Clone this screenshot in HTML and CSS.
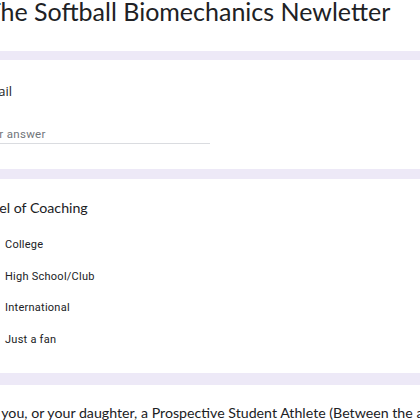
FILE: index.html
```html
<!DOCTYPE html>
<html>
<head>
<meta charset="utf-8">
<link rel="stylesheet" href="styles.css">
</head>
<body>
<div class="page">
  <header class="head">
    <h1 class="title">The Softball Biomechanics Newletter</h1>
  </header>
  <main class="list">
    <section class="card card-email">
      <div class="content">
        <div class="label">Email</div>
        <div class="input"><span class="ph">Your answer</span></div>
      </div>
    </section>
    <section class="card card-level">
      <div class="content level-wrap">
        <div class="qtitle">Level of Coaching</div>
        <div class="options">
          <div class="opt"><span class="radio"></span><span class="otext">College</span></div>
          <div class="opt"><span class="radio"></span><span class="otext">High School/Club</span></div>
          <div class="opt"><span class="radio"></span><span class="otext">International</span></div>
          <div class="opt"><span class="radio"></span><span class="otext">Just a fan</span></div>
        </div>
      </div>
    </section>
    <section class="card card-q3">
      <div class="content q3wrap">
        <div class="qtitle q3">Are you, or your daughter, a Prospective Student Athlete (Between the ages of 13 and 18)?</div>
      </div>
    </section>
  </main>
</div>
</body>
</html>
```
FILE: styles.css
```css
html, body {
  margin: 0;
  padding: 0;
  background: #ffffff;
}
.page {
  width: 420px;
  height: 420px;
  overflow: hidden;
  background: #ede9f7;
}
.head {
  background: #ffffff;
  height: 51px;
  overflow: hidden;
}
.title {
  margin: 0 0 0 -14px;
  font-family: Lato, "Open Sans", sans-serif;
  font-weight: 400;
  font-size: 25px;
  line-height: 22px;
  color: #202124;
  white-space: nowrap;
}
.list {
  display: flex;
  flex-direction: column;
  gap: 10px;
  padding-top: 9px;
}
.card {
  background: #ffffff;
  overflow: hidden;
}
.content {
  margin-left: -23px;
  white-space: nowrap;
}
.card-email {
  height: 109px;
  padding-top: 21px;
  box-sizing: border-box;
}
.label {
  margin-left: 2px;
  font-family: "Open Sans", sans-serif;
  font-size: 13px;
  line-height: 20px;
  color: #202124;
}
.input {
  margin-left: 2px;
  margin-top: 23px;
  width: 231px;
  height: 19px;
  border-bottom: 1px solid #dadce0;
}
.ph {
  font-family: Roboto, sans-serif;
  font-size: 11.5px;
  line-height: 20px;
  color: #70757a;
  letter-spacing: 0.3px;
}
.card-level {
  height: 194px;
  padding-top: 19px;
  box-sizing: border-box;
}
.qtitle {
  font-family: Lato, "Open Sans", sans-serif;
  font-size: 14.2px;
  line-height: 20px;
  color: #202124;
}
.level-wrap .qtitle {
  margin-left: 1px;
}
.options {
  margin-top: 11px;
  display: flex;
  flex-direction: column;
}
.opt {
  height: 31.5px;
  display: flex;
  align-items: center;
  gap: 12px;
}
.radio {
  width: 16px;
  height: 16px;
  border: 2px solid #5f6368;
  border-radius: 50%;
  box-sizing: border-box;
  flex: none;
}
.otext {
  font-family: Roboto, sans-serif;
  font-size: 11px;
  color: #202124;
  letter-spacing: 0.25px;
}
.card-q3 {
  margin-top: 2px;
  padding-top: 17px;
  height: 60px;
}
.q3wrap {
  margin-left: -24px;
}
.q3 {
  line-height: 22px;
}
```
